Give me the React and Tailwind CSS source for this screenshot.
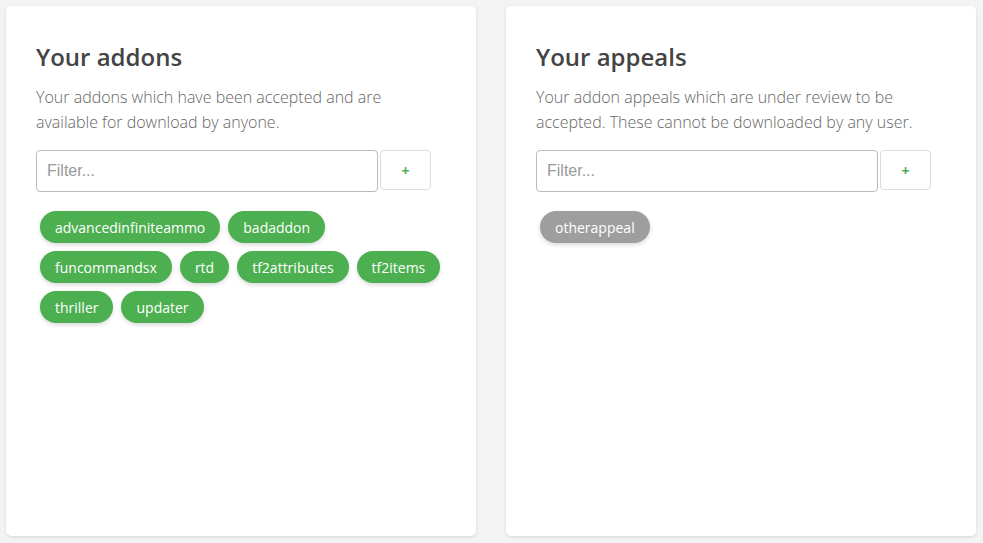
import React from "react";

function Chip({ label, gray }) {
  return (
    <span
      className={`m-1 inline-flex h-8 items-center rounded-full px-[15px] text-[14px] text-white shadow-[0_2px_4px_rgba(0,0,0,0.15)] ${
        gray ? "bg-[#9e9e9e]" : "bg-[#4caf50]"
      }`}
    >
      {label}
    </span>
  );
}

function Panel({ title, desc, chips, gray }) {
  return (
    <div className="flex-1 rounded-[5px] bg-white px-[30px] pt-[35px] shadow-[0_1px_3px_rgba(0,0,0,0.12)]">
      <h2 className="text-[24px] font-semibold leading-[32px] text-[#444]">{title}</h2>
      <p className="mt-[12px] w-[380px] text-[16px] font-light leading-[25px] text-[#666]">
        {desc}
      </p>
      <div className="mt-[15px] flex items-start gap-[2px]">
        <input
          placeholder="Filter..."
          className="h-[42px] w-[342px] rounded-[4px] border border-[#bbb] px-[10px] text-[16px] text-[#555] placeholder-[#999] outline-none [font-family:'Liberation_Sans',Arial,sans-serif]"
        />
        <button className="flex h-[40px] w-[51px] items-center justify-center rounded-[4px] border border-[#ddd] bg-white text-[14px] font-bold text-[#4caf50]">
          +
        </button>
      </div>
      <div className="-mx-1 mt-[15px] flex flex-wrap pl-[4px]">
        {chips.map((c) => (
          <Chip key={c} label={c} gray={gray} />
        ))}
      </div>
    </div>
  );
}

export default function App() {
  return (
    <div className="flex h-[543px] w-[983px] gap-[30px] bg-[#f3f3f3] p-[6px] pb-[7px] pr-[7px] [font-family:'Open_Sans',sans-serif]">
      <Panel
        title="Your addons"
        desc="Your addons which have been accepted and are available for download by anyone."
        chips={[
          "advancedinfiniteammo",
          "badaddon",
          "funcommandsx",
          "rtd",
          "tf2attributes",
          "tf2items",
          "thriller",
          "updater",
        ]}
      />
      <Panel
        title="Your appeals"
        desc="Your addon appeals which are under review to be accepted. These cannot be downloaded by any user."
        chips={["otherappeal"]}
        gray
      />
    </div>
  );
}
